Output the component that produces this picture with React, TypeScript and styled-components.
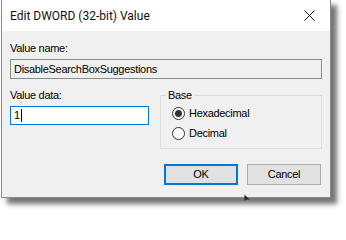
import React from "react";
import styled, { createGlobalStyle } from "styled-components";

const Global = createGlobalStyle`
  html, body { margin: 0; padding: 0; background: #ffffff; }
  body {
    font-family: "Liberation Sans", Arial, sans-serif;
    font-size: 11px;
    letter-spacing: -0.3px;
    color: #000;
  }
  * { box-sizing: border-box; }
`;

const Stage = styled.div`
  position: relative;
  width: 346px;
  height: 214px;
  overflow: hidden;
  padding-left: 1px;
`;

const Dialog = styled.div`
  width: 330px;
  margin-top: -1px;
  border: 1px solid #8a8a8a;
  background: #f0f0f0;
  box-shadow: 6px 6px 5px rgba(0, 0, 0, 0.55);
  display: flex;
  flex-direction: column;
`;

const TitleBar = styled.div`
  height: 31px;
  background: #ffffff;
  display: flex;
  align-items: center;
  justify-content: space-between;
  padding: 0 15px 0 8px;
`;

const Title = styled.span`
  font-family: Roboto, "Noto Sans", sans-serif;
  font-size: 12px;
  letter-spacing: 0;
  line-height: 15px;
  padding-top: 1px;
  color: #111;
`;

const CloseIcon = styled.svg`
  width: 11px;
  height: 11px;
  display: block;
`;

const Body = styled.div`
  padding: 10px 8px 12px 8px;
  display: flex;
  flex-direction: column;
`;

const Label = styled.div`
  line-height: 15px;
  height: 15px;
`;

const Field = styled.div<{ $focused?: boolean; $readonly?: boolean }>`
  margin-top: 3px;
  height: ${(p) => (p.$focused ? 19 : 20)}px;
  border: 1px solid ${(p) => (p.$focused ? "#0078d7" : "#8c8c8c")};
  background: ${(p) => (p.$readonly ? "#f0f0f0" : "#ffffff")};
  display: flex;
  align-items: center;
  padding-left: 3px;
  line-height: 15px;
`;

const Caret = styled.span`
  display: inline-block;
  width: 1px;
  height: 13px;
  background: #000;
  margin-left: 1px;
`;

const Row = styled.div`
  margin-top: 9px;
  display: grid;
  grid-template-columns: 139px 162px;
  column-gap: 11px;
  align-items: start;
`;

const Column = styled.div`
  display: flex;
  flex-direction: column;
`;

const Group = styled.fieldset`
  margin: 0;
  padding: 0 0 5px 11px;
  border: 1px solid #dcdcdc;
  min-inline-size: 0;
  height: 61px;
  display: flex;
  flex-direction: column;
`;

const Legend = styled.legend`
  padding: 0 2px;
  margin-left: -6px;
  line-height: 15px;
`;

const Option = styled.div`
  height: 20px;
  display: flex;
  align-items: center;
  gap: 4px;
`;

const Radio = styled.span<{ $checked?: boolean }>`
  width: 13px;
  height: 13px;
  border-radius: 50%;
  border: 1px solid #333333;
  background: #ffffff;
  display: flex;
  align-items: center;
  justify-content: center;
  &::after {
    content: "";
    width: 7px;
    height: 7px;
    border-radius: 50%;
    background: ${(p) => (p.$checked ? "#333333" : "transparent")};
  }
`;

const Buttons = styled.div`
  margin-top: 15px;
  display: flex;
  justify-content: flex-end;
  gap: 9px;
  padding-right: 1px;
`;

const Button = styled.div<{ $default?: boolean }>`
  width: 74px;
  height: 21px;
  background: #e1e1e1;
  border: ${(p) => (p.$default ? "2px solid #0078d7" : "1px solid #adadad")};
  display: flex;
  align-items: center;
  justify-content: center;
  line-height: 15px;
`;

const Cursor = styled.svg`
  position: absolute;
  left: 244px;
  top: 194px;
  width: 6px;
  height: 8px;
`;

export default function App() {
  return (
    <>
      <Global />
      <Stage>
        <Dialog>
          <TitleBar>
            <Title>Edit DWORD (32-bit) Value</Title>
            <CloseIcon viewBox="0 0 11 11">
              <path d="M0.5 0.5 L10.5 10.5 M10.5 0.5 L0.5 10.5" stroke="#111" strokeWidth="1" fill="none" />
            </CloseIcon>
          </TitleBar>
          <Body>
            <Label>Value name:</Label>
            <Field $readonly>DisableSearchBoxSuggestions</Field>
            <Row>
              <Column>
                <Label>Value data:</Label>
                <Field $focused>
                  1<Caret />
                </Field>
              </Column>
              <Group>
                <Legend>Base</Legend>
                <Option>
                  <Radio $checked />
                  Hexadecimal
                </Option>
                <Option>
                  <Radio />
                  Decimal
                </Option>
              </Group>
            </Row>
            <Buttons>
              <Button $default>OK</Button>
              <Button>Cancel</Button>
            </Buttons>
          </Body>
        </Dialog>
        <Cursor viewBox="0 0 6 8">
          <path d="M0.5 0.5 L0.5 7 L2 5.5 L5.5 5.5 Z" fill="#222" />
        </Cursor>
      </Stage>
    </>
  );
}
